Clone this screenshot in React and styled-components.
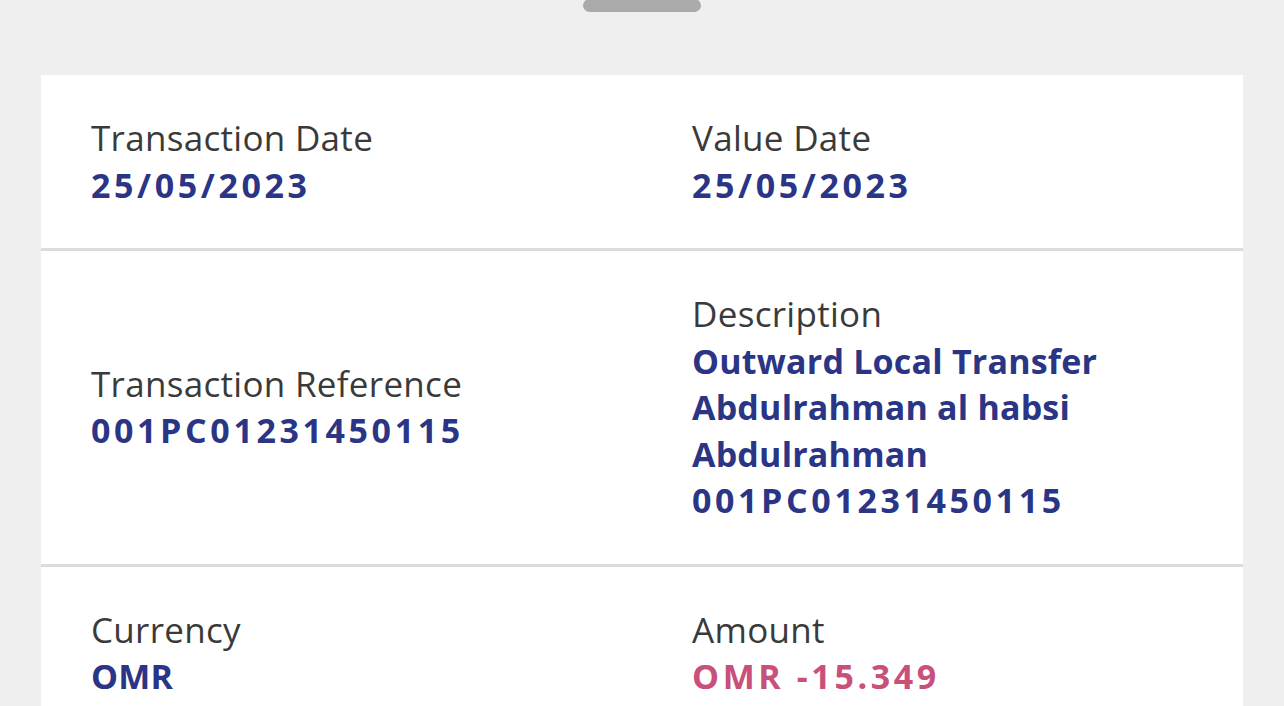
import styled, { createGlobalStyle } from 'styled-components'

const Global = createGlobalStyle`
  html, body {
    margin: 0;
    padding: 0;
    background: #efefef;
  }
  body {
    font-family: "Open Sans", "Noto Sans", sans-serif;
  }
`

const Sheet = styled.div`
  height: 706px;
  overflow: hidden;
  display: flex;
  flex-direction: column;
  align-items: center;
`

const Handle = styled.div`
  flex-shrink: 0;
  width: 118px;
  height: 13px;
  margin-top: -1px;
  border-radius: 7px;
  background: #aaaaaa;
`

const Card = styled.section`
  flex-shrink: 0;
  align-self: stretch;
  margin: 63px 41px 0 41px;
  background: #fff;
`

const Row = styled.div`
  display: grid;
  grid-template-columns: 1fr 1fr;
  align-items: center;
  padding: 40px 0 40px;
  border-top: ${(p) => (p.first ? 'none' : '3px solid #dcdcdc')};
`

const Cell = styled.div`
  padding-left: 50px;
  display: flex;
  flex-direction: column;
`

const Label = styled.div`
  font-size: 35px;
  line-height: 46.5px;
  color: #3a3a3a;
  letter-spacing: 0.3px;
`

const Value = styled.div`
  font-size: 34px;
  line-height: 46.5px;
  font-weight: 700;
  white-space: nowrap;
  letter-spacing: ${(p) => (p.numeric ? '3.6px' : '0.2px')};
  color: ${(p) => (p.negative ? '#c8507a' : '#2a3585')};
`

const isNumeric = (s) => /\d{3}/.test(s)

const rows = [
  [
    { label: 'Transaction Date', lines: ['25/05/2023'] },
    { label: 'Value Date', lines: ['25/05/2023'] },
  ],
  [
    { label: 'Transaction Reference', lines: ['001PC01231450115'] },
    {
      label: 'Description',
      lines: ['Outward Local Transfer', 'Abdulrahman al habsi', 'Abdulrahman', '001PC01231450115'],
    },
  ],
  [
    { label: 'Currency', lines: ['OMR'] },
    { label: 'Amount', lines: ['OMR -15.349'], negative: true },
  ],
]

const App = () => {
  return (
    <>
      <Global />
      <Sheet>
        <Handle />
        <Card>
          {rows.map((row, i) => (
            <Row key={i} first={i === 0}>
              {row.map((cell) => (
                <Cell key={cell.label}>
                  <Label>{cell.label}</Label>
                  {cell.lines.map((line) => (
                    <Value key={line} negative={cell.negative} numeric={isNumeric(line)}>
                      {line}
                    </Value>
                  ))}
                </Cell>
              ))}
            </Row>
          ))}
        </Card>
      </Sheet>
    </>
  )
}

export default App
